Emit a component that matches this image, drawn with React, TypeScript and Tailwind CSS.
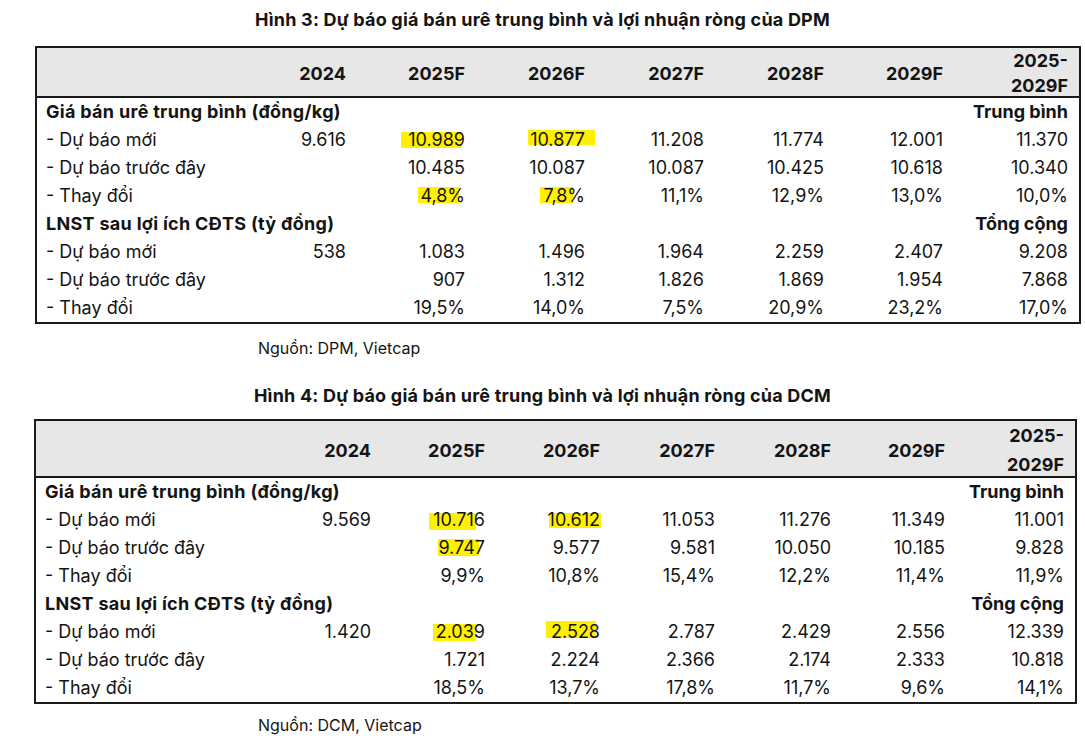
import React from "react";

type Mark = { right: number; top: number; w: number; h: number };

interface Row {
  label: string;
  bold?: boolean;
  values: string[];
}

interface TableProps {
  cols: string;
  tableClass: string;
  headerClass: string;
  headLeading: string;
  rows: Row[];
  marks: Record<string, Mark>;
}

const years = ["2024", "2025F", "2026F", "2027F", "2028F", "2029F"];

const dpmRows: Row[] = [
  { label: "Giá bán urê trung bình (đồng/kg)", bold: true, values: ["", "", "", "", "", "", "Trung bình"] },
  { label: "- Dự báo mới", values: ["9.616", "10.989", "10.877", "11.208", "11.774", "12.001", "11.370"] },
  { label: "- Dự báo trước đây", values: ["", "10.485", "10.087", "10.087", "10.425", "10.618", "10.340"] },
  { label: "- Thay đổi", values: ["", "4,8%", "7,8%", "11,1%", "12,9%", "13,0%", "10,0%"] },
  { label: "LNST sau lợi ích CĐTS (tỷ đồng)", bold: true, values: ["", "", "", "", "", "", "Tổng cộng"] },
  { label: "- Dự báo mới", values: ["538", "1.083", "1.496", "1.964", "2.259", "2.407", "9.208"] },
  { label: "- Dự báo trước đây", values: ["", "907", "1.312", "1.826", "1.869", "1.954", "7.868"] },
  { label: "- Thay đổi", values: ["", "19,5%", "14,0%", "7,5%", "20,9%", "23,2%", "17,0%"] },
];

const dcmRows: Row[] = [
  { label: "Giá bán urê trung bình (đồng/kg)", bold: true, values: ["", "", "", "", "", "", "Trung bình"] },
  { label: "- Dự báo mới", values: ["9.569", "10.716", "10.612", "11.053", "11.276", "11.349", "11.001"] },
  { label: "- Dự báo trước đây", values: ["", "9.747", "9.577", "9.581", "10.050", "10.185", "9.828"] },
  { label: "- Thay đổi", values: ["", "9,9%", "10,8%", "15,4%", "12,2%", "11,4%", "11,9%"] },
  { label: "LNST sau lợi ích CĐTS (tỷ đồng)", bold: true, values: ["", "", "", "", "", "", "Tổng cộng"] },
  { label: "- Dự báo mới", values: ["1.420", "2.039", "2.528", "2.787", "2.429", "2.556", "12.339"] },
  { label: "- Dự báo trước đây", values: ["", "1.721", "2.224", "2.366", "2.174", "2.333", "10.818"] },
  { label: "- Thay đổi", values: ["", "18,5%", "13,7%", "17,8%", "11,7%", "9,6%", "14,1%"] },
];

// key = "row-col" (col index into values)
const dpmMarks: Record<string, Mark> = {
  "1-1": { right: 15, top: 6, w: 60, h: 16 },
  "1-2": { right: 1, top: 4, w: 67, h: 15 },
  "3-1": { right: 17, top: 5, w: 41, h: 16 },
  "3-2": { right: 23, top: 5, w: 33, h: 16 },
};

const dcmMarks: Record<string, Mark> = {
  "1-1": { right: 20, top: 7, w: 47, h: 17 },
  "2-1": { right: 17, top: 5, w: 41, h: 17 },
  "1-2": { right: 10, top: 7, w: 52, h: 15 },
  "5-1": { right: 20, top: 6, w: 43, h: 17 },
  "5-2": { right: 15, top: 3, w: 50, h: 17 },
};

function ForecastTable({ cols, tableClass, headerClass, headLeading, rows, marks }: TableProps) {
  return (
    <div className={`border-2 border-[#1a1a1a] ${tableClass}`}>
      <div className={`grid ${cols} items-center bg-[#e7e7e7] border-b-2 border-[#1a1a1a] font-bold ${headerClass}`}>
        <div />
        {years.map((y) => (
          <div key={y} className="text-right pr-[11px]">
            {y}
          </div>
        ))}
        <div className={`text-right pr-[11px] ${headLeading}`}>
          2025-
          <br />
          2029F
        </div>
      </div>
      {rows.map((row, r) => (
        <div key={r} className={`grid ${cols} h-[28px] items-center leading-[28px]`}>
          <div className={`pl-[9px] whitespace-nowrap ${row.bold ? "font-bold tracking-[0.3px]" : ""}`}>
            {row.label}
          </div>
          {row.values.map((v, c) => {
            const m = marks[`${r}-${c}`];
            return (
              <div
                key={c}
                className={`relative h-full text-right pr-[11px] whitespace-nowrap ${row.bold ? "font-bold" : ""}`}
              >
                {m && (
                  <span
                    className="absolute bg-[#fff000]"
                    style={{ right: m.right, top: m.top, width: m.w, height: m.h }}
                  />
                )}
                <span className="relative">{v}</span>
              </div>
            );
          })}
        </div>
      ))}
    </div>
  );
}

export default function App() {
  return (
    <div className="w-[1085px] h-[741px] bg-white text-[#141414] font-['Inter','Noto_Sans',sans-serif] text-[18px]">
      <h2 className="pt-[9px] text-center text-[18px] leading-[22px] font-bold tracking-[0.2px]">
        Hình 3: Dự báo giá bán urê trung bình và lợi nhuận ròng của DPM
      </h2>
      <ForecastTable
        cols="grid-cols-[200px_120px_119px_120px_119px_120px_119px_1fr]"
        tableClass="mt-[15px] ml-[35px] w-[1046px]"
        headerClass="h-[50px]"
        headLeading="leading-[25px]"
        rows={dpmRows}
        marks={dpmMarks}
      />
      <p className="mt-[14px] pl-[258px] text-[16px] leading-[20px]">Nguồn: DPM, Vietcap</p>

      <h2 className="mt-[27px] text-center text-[18px] leading-[22px] font-bold tracking-[0.2px]">
        Hình 4: Dự báo giá bán urê trung bình và lợi nhuận ròng của DCM
      </h2>
      <ForecastTable
        cols="grid-cols-[231px_115px_114px_115px_115px_116px_114px_1fr]"
        tableClass="mt-[12px] ml-[34px] w-[1043px]"
        headerClass="h-[57px]"
        headLeading="leading-[29px]"
        rows={dcmRows}
        marks={dcmMarks}
      />
      <p className="mt-[11px] pl-[258px] text-[16px] leading-[20px]">Nguồn: DCM, Vietcap</p>
    </div>
  );
}
